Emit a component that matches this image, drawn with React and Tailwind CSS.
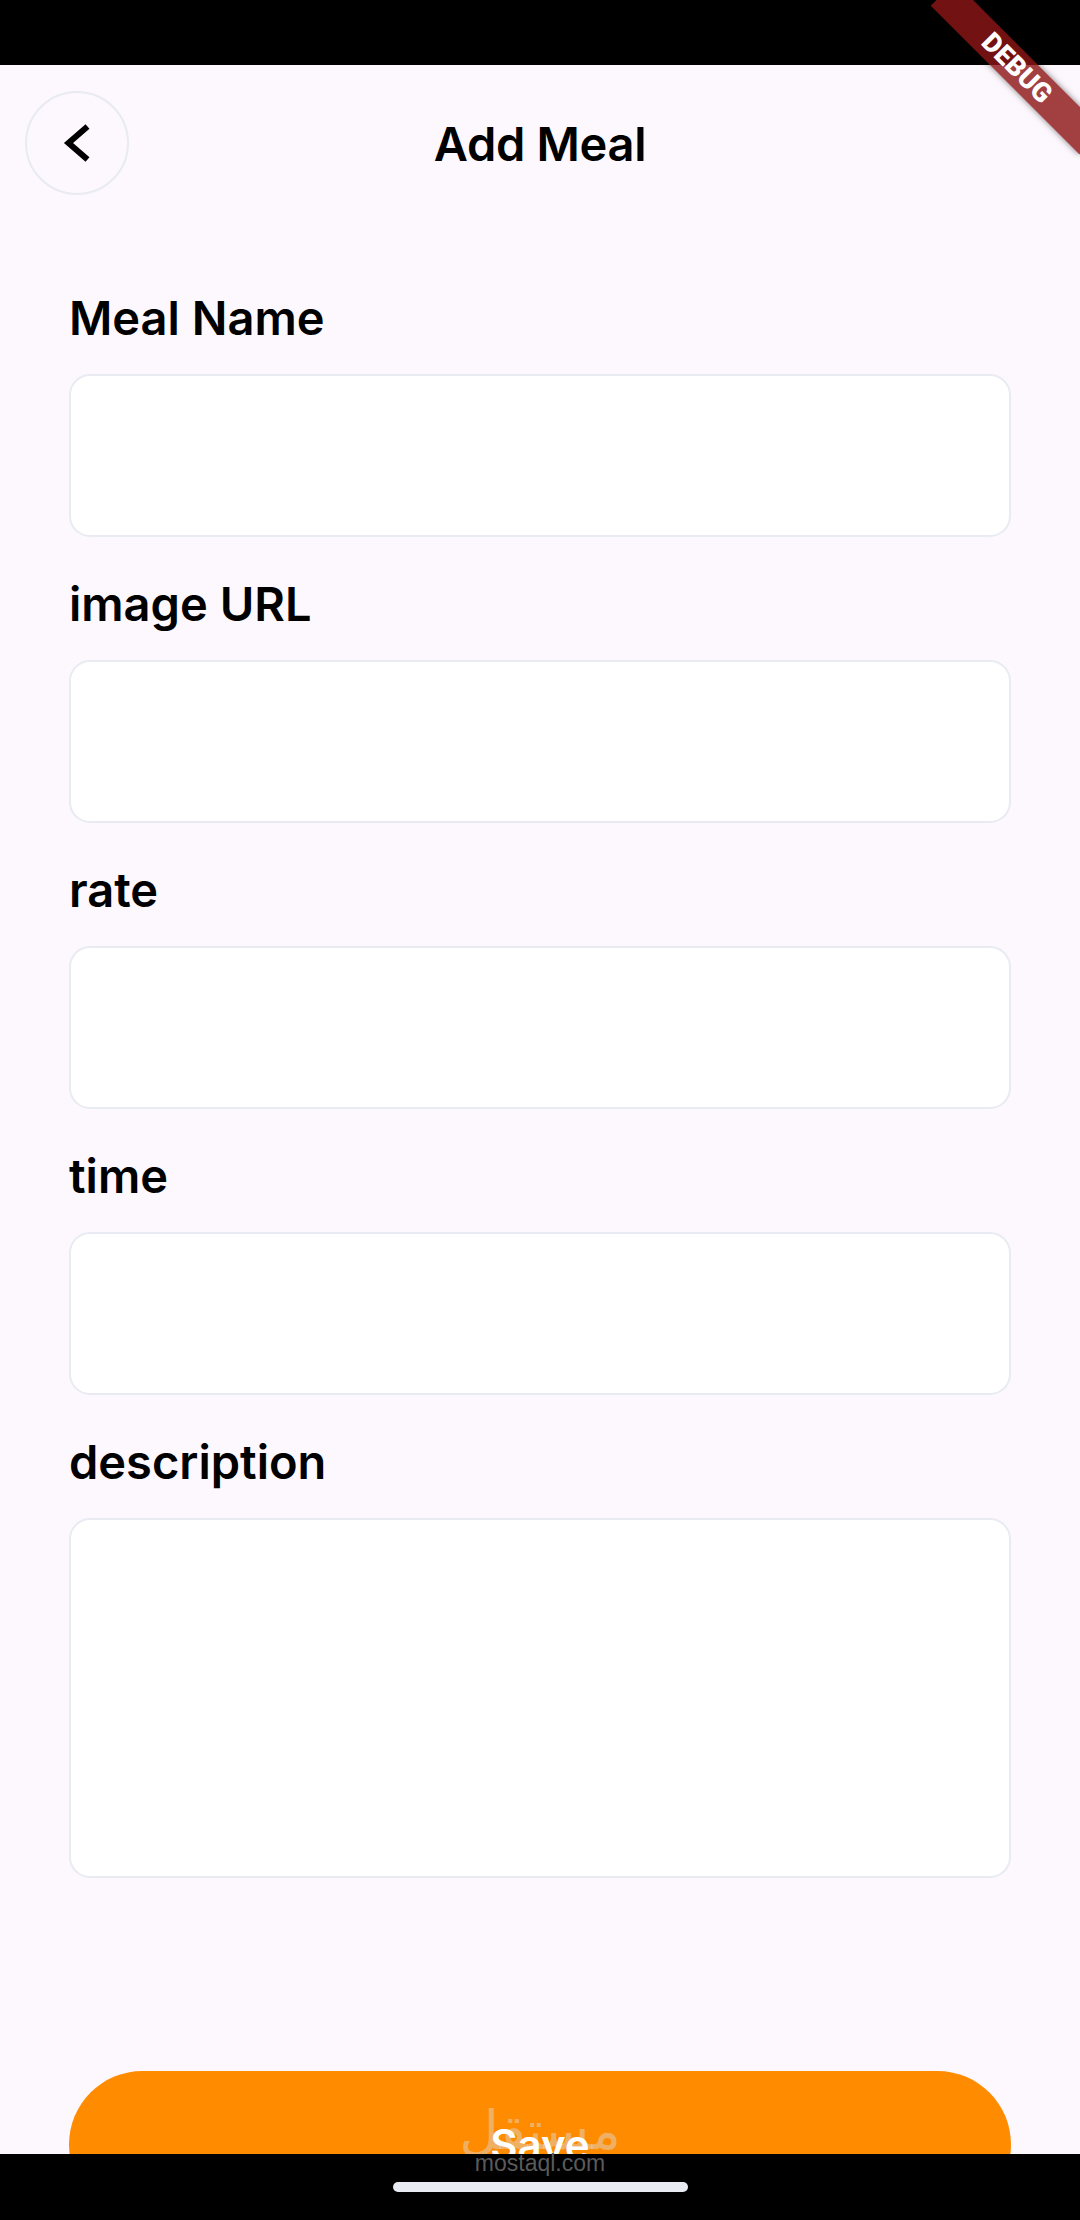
import React from "react";

function Field({ label, tall }) {
  return (
    <div className="flex flex-col shrink-0">
      <div className="h-[57px] leading-[57px] text-[47px] font-semibold">{label}</div>
      <div
        className={
          tall
            ? "mt-[28px] h-[360px] rounded-[21px] border-[2.5px] border-[#e8ebf1] bg-white"
            : "mt-[28px] h-[163px] rounded-[21px] border-[2.5px] border-[#e8ebf1] bg-white"
        }
      />
    </div>
  );
}

export default function App() {
  return (
    <div className="relative w-[1080px] h-[2220px] overflow-hidden flex flex-col bg-[#fdf7fe] font-['Inter',sans-serif] text-black">
      {/* status bar */}
      <div className="h-[65px] shrink-0 bg-black" />

      {/* content */}
      <main className="relative flex-1 min-h-0 overflow-hidden flex flex-col">
        <header className="shrink-0 grid grid-cols-[104px_1fr_104px] items-center px-[25px] pt-[26px]">
          <button className="w-[104px] h-[104px] rounded-full border-[2.5px] border-[#e8ebf0] flex items-center justify-center">
            <svg width="99" height="99" viewBox="2.5 2.5 99 99">
              <polyline
                points="62,35 43,51.5 62,68"
                fill="none"
                stroke="#000"
                strokeWidth="6"
                strokeLinecap="butt"
                strokeLinejoin="miter"
              />
            </svg>
          </button>
          <h1 className="text-center text-[47px] leading-[57px] font-semibold tracking-[-0.3px]">Add Meal</h1>
          <div />
        </header>

        <div className="shrink-0 flex flex-col gap-[38px] px-[69px] mt-[94px]">
          <Field label="Meal Name" />
          <Field label="image URL" />
          <Field label="rate" />
          <Field label="time" />
          <Field label="description" tall />
        </div>

        <div className="shrink-0 px-[69px] mt-[193px]">
          <button className="relative w-full h-[147px] shrink-0 rounded-full bg-[#ff8c00] flex items-center justify-center">
            <span className="absolute left-0 right-0 top-[33px] text-center font-['DejaVu_Sans',sans-serif] text-[54px] leading-[54px] text-[#dcdcdc73]">
              مستقل
            </span>
            <span className="relative text-white text-[42px] font-semibold leading-[50px]">Save</span>
          </button>
        </div>
      </main>

      {/* navigation bar */}
      <div className="relative h-[66px] shrink-0 bg-black flex justify-center">
        <div className="mt-[28px] w-[295px] h-[10px] rounded-full bg-[#e8ebf2]" />
        <div className="absolute left-0 right-0 top-[-2px] text-center font-['Liberation_Sans',Arial,sans-serif] text-[23px] leading-[23px] text-[#5a5a5a]">
          mostaql.com
        </div>
      </div>

      {/* debug banner */}
      <div className="absolute left-[912px] top-[51px] w-[210px] h-[34px] rotate-45 bg-[linear-gradient(#b71c1ca0,#b71c1ca0),linear-gradient(#0000007f,#0000007f)] shadow-[0_0_6px_rgba(0,0,0,0.5)] flex items-center justify-center">
        <span className="font-['Roboto',sans-serif] font-black text-white text-[27px] leading-[27px]">DEBUG</span>
      </div>
    </div>
  );
}
